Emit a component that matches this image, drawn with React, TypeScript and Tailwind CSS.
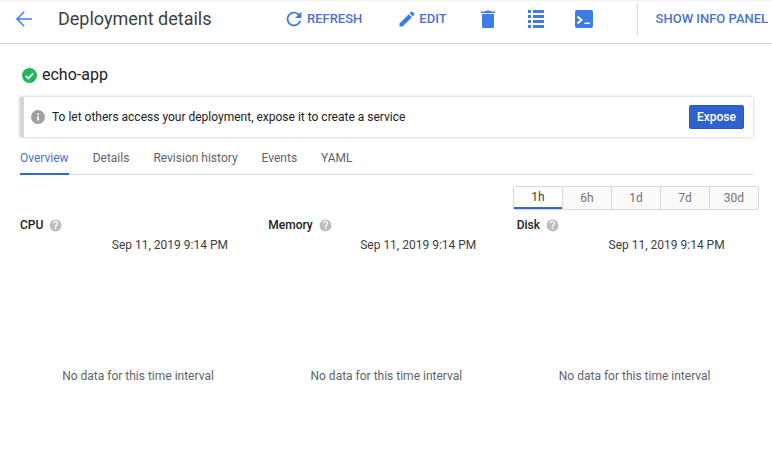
const TABS = ["Overview", "Details", "Revision history", "Events", "YAML"];
const RANGES = ["1h", "6h", "1d", "7d", "30d"];
const CHARTS = [
  { name: "CPU", width: "w-[248.33px]" },
  { name: "Memory", width: "w-[248.33px]" },
  { name: "Disk", width: "w-[242px]" },
];

function HelpIcon() {
  return (
    <svg viewBox="0 0 24 24" className="ml-[6px] h-[13px] w-[13px] fill-[#bdbdbd]">
      <path d="M12 1a11 11 0 1 0 0 22 11 11 0 0 0 0-22zm1.200 18h-2.400v-2.400h2.400V19zm2.500-8.100-1.100 1.100c-.9.9-1.400 1.600-1.400 3.200h-2.400v-.6c0-1.300.5-2.500 1.400-3.400l1.500-1.500c.4-.4.7-1 .7-1.700a2.400 2.400 0 0 0-4.800 0H7.200a4.800 4.800 0 0 1 9.600 0c0 1.100-.4 2-1.100 2.900z" />
    </svg>
  );
}

function Chart({ name, width }: { name: string; width: string }) {
  return (
    <div className={`${width} shrink-0`}>
      <div className="flex h-[16px] items-center text-[12px] font-medium leading-[16px] text-[#202124]">
        {name}
        <HelpIcon />
      </div>
      <div className="mt-[4px] w-[208px] text-right text-[12px] leading-[16px] text-[#3c4043]">
        Sep 11, 2019 9:14 PM
      </div>
      <div className="mt-[115px] w-[236px] text-center text-[12px] leading-[16px] text-[#5f6368]">
        No data for this time interval
      </div>
    </div>
  );
}

export default function App() {
  return (
    <div className="h-[475px] w-[772px] overflow-hidden bg-white font-['Roboto',sans-serif]">
      <header className="flex h-[44px] items-center overflow-hidden border-b border-[#d8d8d8] pb-[5px] pl-[12px] shadow-[inset_0_2px_2px_-1px_#eeeeee]">
        <svg viewBox="0 0 24 24" className="h-[24px] w-[24px] shrink-0 fill-[#3f7be6]">
          <path d="M20 11.200H6.800l5.900-5.900L11.700 4.200 4 12l7.700 7.800 1-1.100-5.900-5.900H20z" />
        </svg>
        <h1 className="ml-[22px] w-[225px] shrink-0 text-[18px] leading-[24px] text-[#3c4043]">Deployment details</h1>
        <svg viewBox="0 0 24 24" className="h-[22px] w-[22px] shrink-0 fill-[#3f7be6]">
          <path d="M17.650 6.350A7.958 7.958 0 0 0 12 4c-4.420 0-7.990 3.580-7.990 8s3.570 8 7.990 8c3.730 0 6.840-2.550 7.730-6h-2.080A5.990 5.990 0 0 1 12 18c-3.310 0-6-2.690-6-6s2.690-6 6-6c1.660 0 3.140.69 4.220 1.780L13 11h7V4l-2.350 2.350z" />
        </svg>
        <span className="ml-[2px] text-[13px] font-medium text-[#4a72d6]">REFRESH</span>
        <svg viewBox="0 0 24 24" className="ml-[35px] h-[20px] w-[20px] shrink-0 fill-[#3f7be6]">
          <path d="M3 17.250V21h3.750L17.810 9.940l-3.750-3.750L3 17.250zM20.710 7.040a1 1 0 0 0 0-1.410l-2.340-2.340a1 1 0 0 0-1.410 0l-1.830 1.830 3.750 3.750 1.830-1.830z" />
        </svg>
        <span className="ml-[2px] text-[13px] font-medium text-[#4a72d6]">EDIT</span>
        <svg viewBox="0 0 14 18" className="ml-[34px] h-[18px] w-[14px] shrink-0 fill-[#3f7be6]">
          <path d="M1 4h12v12.500c0 .8-.7 1.500-1.500 1.500h-9C1.700 18 1 17.300 1 16.500V4zM0 1.500h4L5 .5h4l1 1h4V3H0z" />
        </svg>
        <svg viewBox="0 0 16 18" className="ml-[33px] h-[18px] w-[16px] shrink-0 fill-[#3f7be6]">
          <path d="M0 0h3v3H0zM5 0h11v3H5zM0 5h3v3H0zM5 5h11v3H5zM0 10h3v3H0zM5 10h11v3H5zM0 15h3v3H0zM5 15h11v3H5z" />
        </svg>
        <svg viewBox="0 0 18 18" className="ml-[31px] h-[18px] w-[18px] shrink-0">
          <rect width="18" height="18" rx="2" fill="#3f7be6" />
          <path d="M2.500 6.500l4 3.500-4 3.500" fill="none" stroke="#fff" strokeWidth="2" />
          <path d="M9.500 13.300h5.500" stroke="#fff" strokeWidth="1.500" />
        </svg>
        <div className="ml-[44px] h-[32px] w-px shrink-0 bg-[#d8d8d8]" />
        <span className="ml-[18px] whitespace-nowrap text-[13px] font-medium text-[#4a72d6]">SHOW INFO PANEL</span>
      </header>

      <main className="px-[20px]">
        <div className="mt-[21px] flex h-[20px] items-center pl-[2px]">
          <svg viewBox="0 0 24 24" className="h-[15px] w-[15px]">
            <circle cx="12" cy="12" r="12" fill="#1fb85a" />
            <path d="M6 12.500l4 4 8-8" fill="none" stroke="#fff" strokeWidth="3" />
          </svg>
          <span className="ml-[5px] text-[16px] leading-[20px] text-[#202124]">echo-app</span>
        </div>

        <div className="mt-[12px] flex h-[40px] w-[733px] items-center border-l-4 border-[#d5d5d5] bg-white pl-[7px] pr-[9px] shadow-[0_0_3px_rgba(0,0,0,0.25)]">
          <svg viewBox="0 0 24 24" className="h-[14px] w-[14px] fill-[#a0a0a0]">
            <path d="M12 0a12 12 0 1 0 0 24 12 12 0 0 0 0-24zm1.500 18h-3v-7.500h3V18zm0-9.500h-3v-3h3v3z" />
          </svg>
          <span className="ml-[7px] flex-1 text-[12px] text-[#202124]">
            To let others access your deployment, expose it to create a service
          </span>
          <button className="h-[24px] w-[55px] rounded-[2px] border border-[#2a56c6] bg-[#2f62cf] text-[12px] font-medium text-white">
            Expose
          </button>
        </div>

        <nav className="mt-[7px] flex h-[31px] w-[733px] gap-[24px] border-b border-[#d4d4d4] text-[12px] text-[#5f6368]">
          {TABS.map((tab, i) => (
            <div
              key={tab}
              className={
                i === 0
                  ? "-mb-px h-[31px] border-b-2 border-[#3367d6] pt-[6px] leading-[16px] text-[#4a6fc9]"
                  : "pt-[6px] leading-[16px]"
              }
            >
              {tab}
            </div>
          ))}
        </nav>

        <div className="ml-[493px] mt-[11px] flex h-[24px] w-[246px] rounded-[2px] border border-[#d8d8d8] bg-[#fafafa] text-[12px] text-[#757575]">
          {RANGES.map((range, i) => (
            <div
              key={range}
              className={
                i === 0
                  ? "flex flex-1 items-center justify-center border-b-2 border-[#3367d6] bg-white text-[#3c4043]"
                  : "flex flex-1 items-center justify-center border-l border-[#d8d8d8]"
              }
            >
              {range}
            </div>
          ))}
        </div>

        <div className="mt-[7px] flex">
          {CHARTS.map((chart) => (
            <Chart key={chart.name} name={chart.name} width={chart.width} />
          ))}
        </div>
      </main>
    </div>
  );
}
